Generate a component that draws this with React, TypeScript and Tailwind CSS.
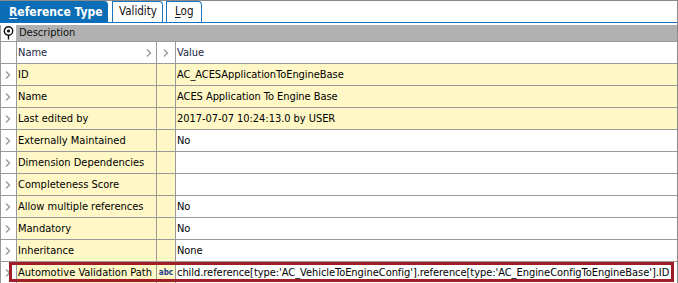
const FONT = { fontFamily: '"DejaVu Sans Condensed", "Liberation Sans", Arial, sans-serif' };

type Row = { name: string; value: string; fullYellow?: boolean; abc?: boolean };

const ROWS: Row[] = [
  { name: 'ID', value: 'AC_ACESApplicationToEngineBase', fullYellow: true },
  { name: 'Name', value: 'ACES Application To Engine Base', fullYellow: true },
  { name: 'Last edited by', value: '2017-07-07 10:24:13.0 by USER', fullYellow: true },
  { name: 'Externally Maintained', value: 'No' },
  { name: 'Dimension Dependencies', value: '' },
  { name: 'Completeness Score', value: '' },
  { name: 'Allow multiple references', value: 'No' },
  { name: 'Mandatory', value: 'No' },
  { name: 'Inheritance', value: 'None' },
  {
    name: 'Automotive Validation Path',
    value: "child.reference[type:'AC_VehicleToEngineConfig'].reference[type:'AC_EngineConfigToEngineBase'].ID",
    abc: true,
  },
];

function Chevron() {
  return (
    <svg width="6" height="8" viewBox="0 0 6 8">
      <path d="M1 0.5 L4.5 4 L1 7.5" fill="none" stroke="#9a9a9a" strokeWidth="1.4" />
    </svg>
  );
}

// first letter underlined (access key)
function Label({ text, underline }: { text: string; underline?: boolean }) {
  if (!underline) return <span className="whitespace-nowrap">{text}</span>;
  return (
    <span className="whitespace-nowrap">
      <span className="underline underline-offset-2">{text.slice(0, 1)}</span>
      {text.slice(1)}
    </span>
  );
}

export default function App() {
  return (
    <div className="w-[678px] h-[283px] overflow-hidden bg-white border-t border-r border-[#8a8a8a] relative text-[11px] text-black" style={FONT}>
      {/* tabs */}
      <div className="flex items-end gap-[3px] h-[21px]">
        <div className="h-[21px] w-[108px] bg-[#0b6db6] rounded-tr-[4px] flex items-center pl-[9px] text-white font-bold text-[12px]">
          <Label text="Reference Type" underline />
        </div>
        <div className="h-[21px] w-[51px] ml-[1px] border border-b-0 border-[#1a75c0] rounded-tr-[4px] flex items-center pl-[6px] text-[11.5px] text-[#111]">
          <Label text="Validity" />
        </div>
        <div className="h-[21px] w-[36px] border border-b-0 border-[#1a75c0] rounded-tr-[4px] flex items-center pl-[8px] text-[11.5px] text-[#111]">
          <Label text="Log" underline />
        </div>
      </div>
      <div className="h-px bg-[#1170bd]" />
      <div className="h-[2px]" />

      <div className="border-l border-[#9a9a9a]">
        {/* description bar */}
        <div className="flex h-[17px] border-b border-[#9a9a9a]">
          <div className="w-[15px] shrink-0 bg-white flex items-center justify-center">
            <svg width="11" height="14" viewBox="0 0 11 14">
              <circle cx="5.5" cy="5" r="4.2" fill="#fff" stroke="#111" strokeWidth="1.4" />
              <circle cx="5.5" cy="5" r="1.6" fill="#111" />
              <path d="M5.5 9 L5.5 13.5" stroke="#111" strokeWidth="1.4" />
            </svg>
          </div>
          <div className="flex-1 bg-[#b1b1b1] flex items-center pl-[3px] text-[#111]">Description</div>
        </div>

        {/* header */}
        <div className="flex h-[22px] border-b border-[#9a9a9a]">
          <div className="w-[16px] shrink-0 border-r border-[#9a9a9a]" />
          <div className="w-[140px] shrink-0 border-r border-[#9a9a9a] flex items-center justify-between pl-[1px] pr-[4px] pt-px text-[#1c2440]">
            Name
            <Chevron />
          </div>
          <div className="w-[19px] shrink-0 border-r border-[#9a9a9a] flex items-center justify-center">
            <Chevron />
          </div>
          <div className="flex-1 flex items-center pl-[1px] pt-px text-[#1c2440]">Value</div>
        </div>

        {ROWS.map((r) => (
          <div key={r.name} className="flex h-[22px] border-b border-[#9a9a9a]">
            <div className="w-[16px] shrink-0 border-r border-[#9a9a9a] bg-white flex items-center pl-[4px]">
              <Chevron />
            </div>
            <div className="w-[140px] shrink-0 border-r border-[#9a9a9a] bg-[#fff8c6] flex items-center pl-[1px] pt-px whitespace-nowrap">
              {r.name}
            </div>
            <div className="w-[19px] shrink-0 border-r border-[#9a9a9a] bg-[#fff8c6] flex items-center justify-center">
              {r.abc && <span className="text-[8px] font-bold text-[#1b3b8a] leading-none">abc</span>}
            </div>
            <div className={`flex-1 flex items-center pl-[1px] pt-px whitespace-nowrap tracking-[-0.05px] ${r.fullYellow ? 'bg-[#fff8c6]' : 'bg-white'}`}>
              {r.value}
            </div>
          </div>
        ))}
      </div>

      {/* highlight annotation */}
      <div className="absolute left-[9px] top-[261px] w-[665px] h-[20px] border-[3px] border-[#a01d28] pointer-events-none" />
    </div>
  );
}
